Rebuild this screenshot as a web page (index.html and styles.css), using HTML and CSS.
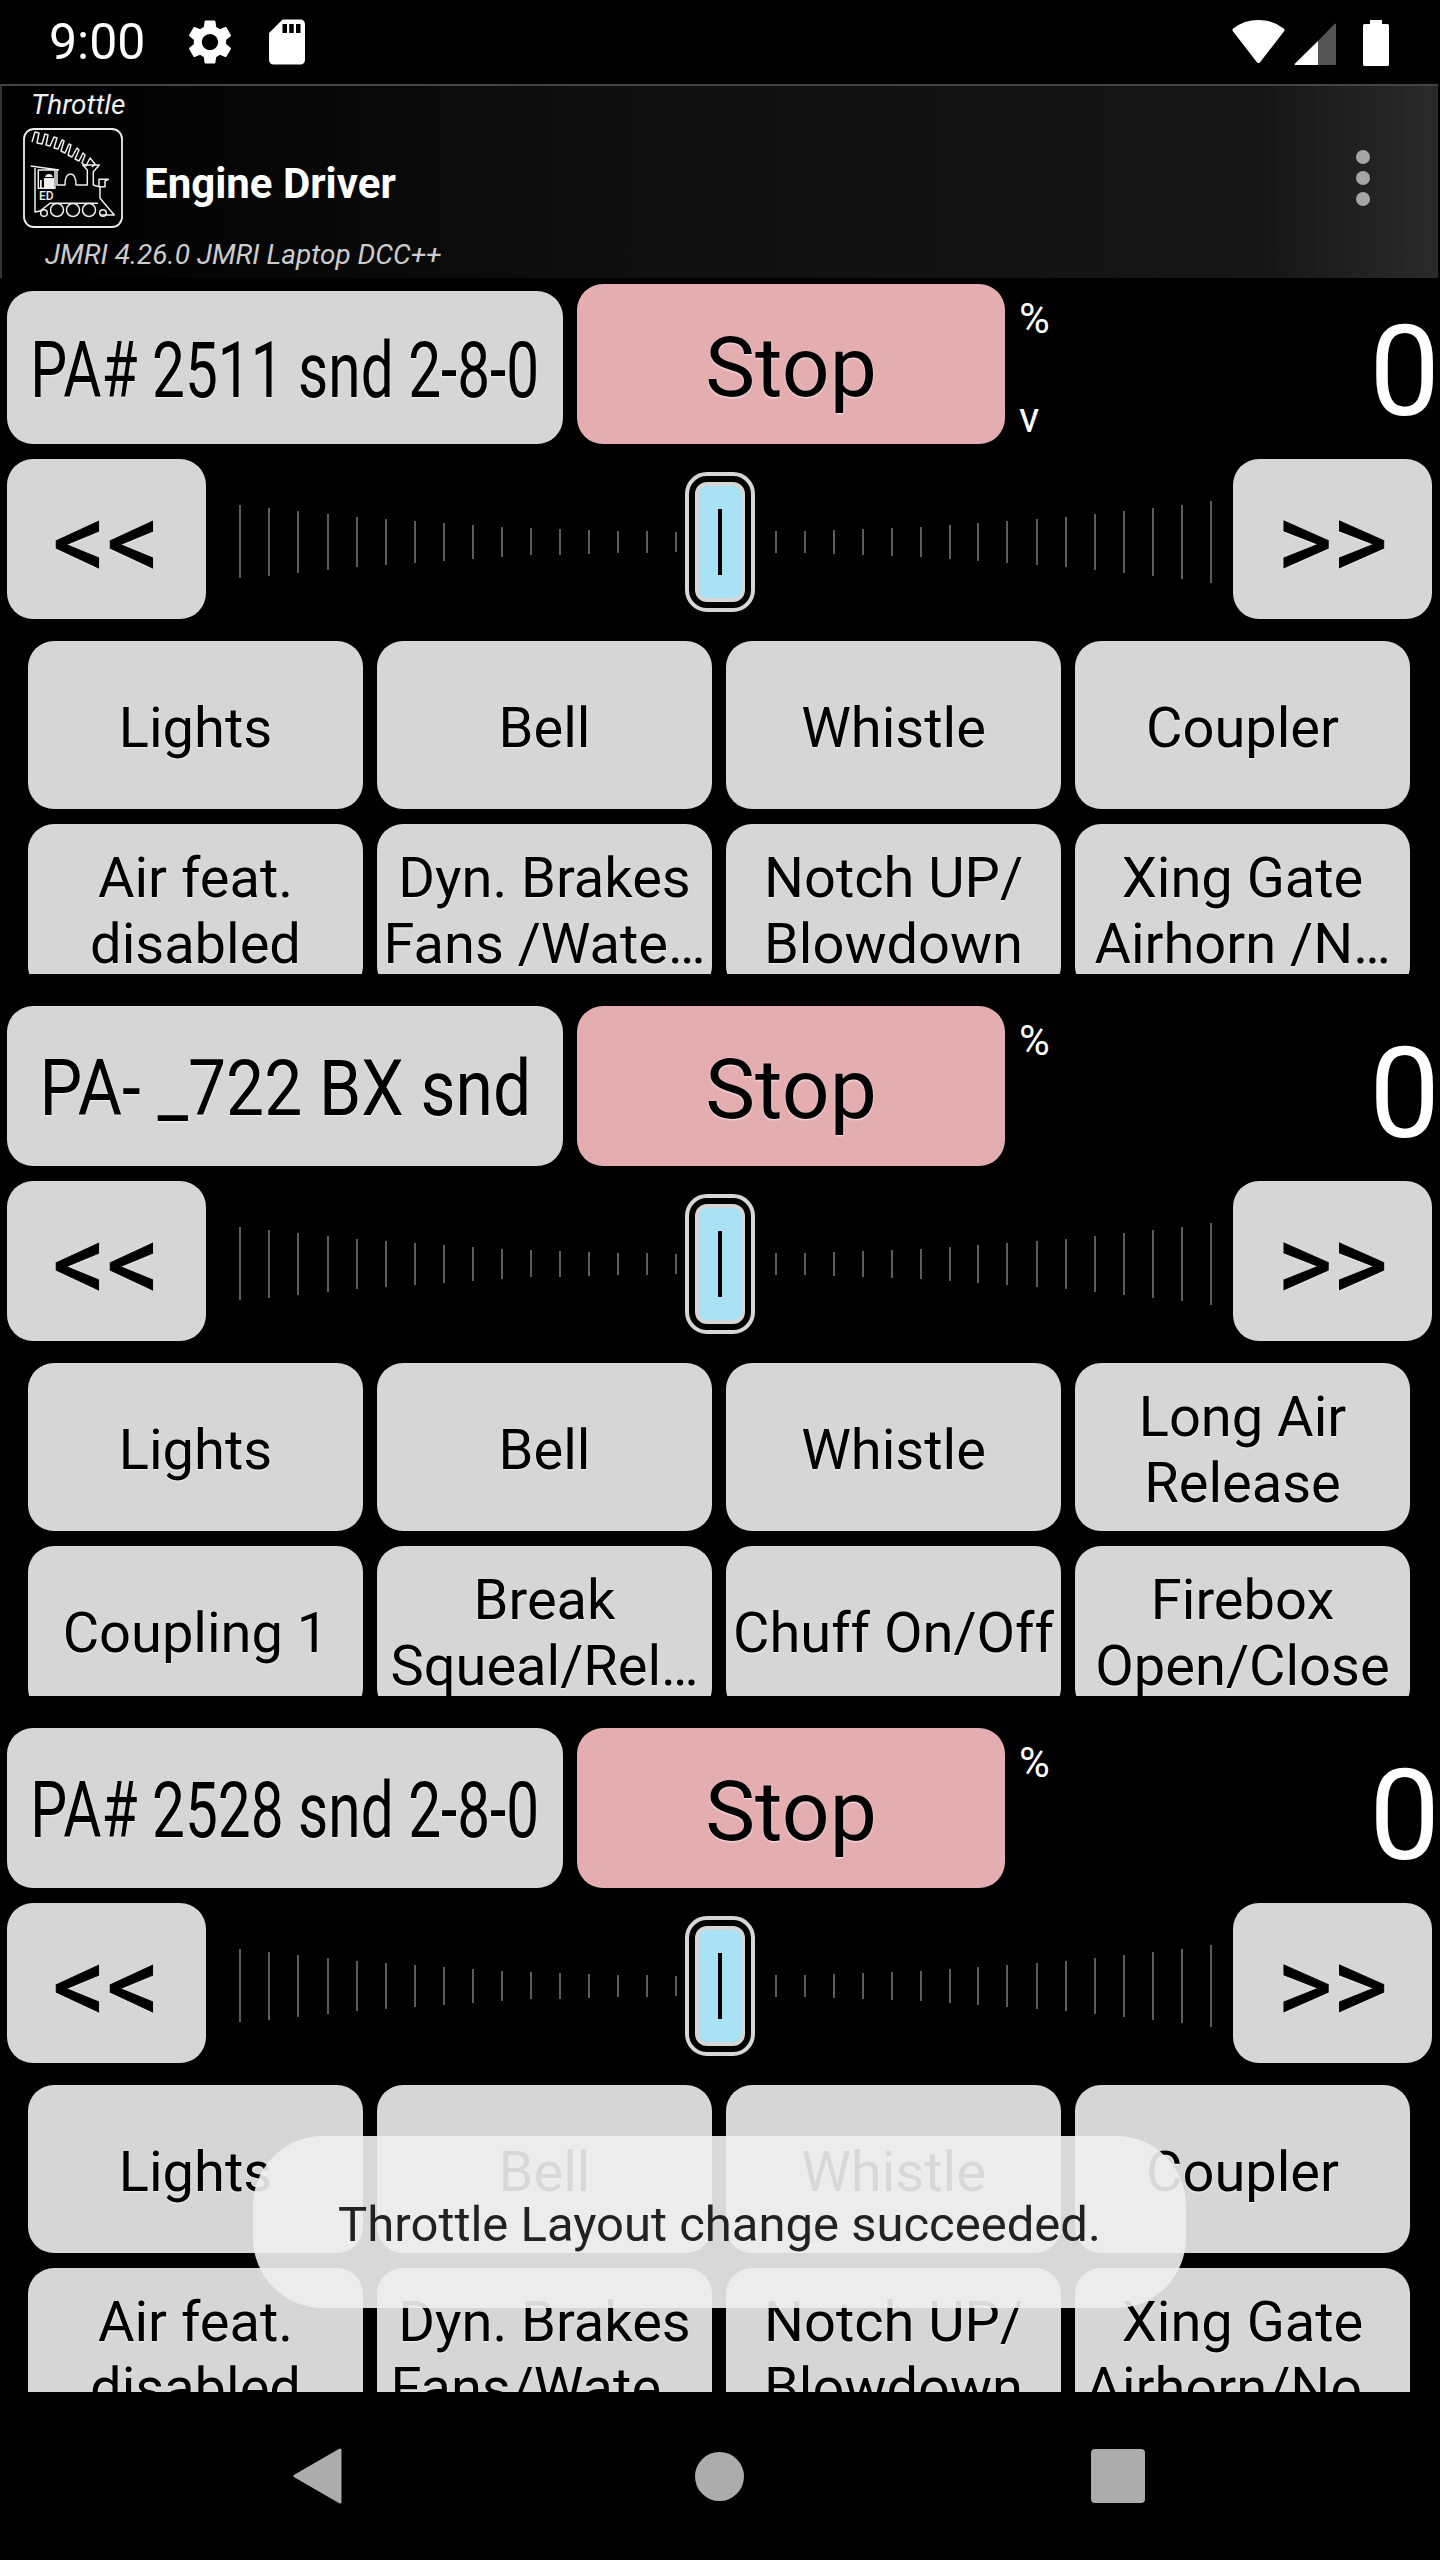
FILE: index.html
```html
<!DOCTYPE html>
<html lang="en">
<head>
    <meta charset="UTF-8">
    <meta name="viewport" content="width=device-width, initial-scale=1.0">
    <title>Engine Driver</title>
    <link rel="stylesheet" href="styles.css">
</head>
<body>
    <svg class="defs" width="0" height="0">
        <symbol id="ticks" viewBox="0 0 1027 160">
            <path d="M34 46V119M63 49V117M92 52V114M122 55V111M151 58V108M180 60V106M209 62V104M238 64V102M267 66V100M296 68V98M325 69V96M354 70V96M383 71V95M412 72V94M441 72V94M470 73V93M541 73V93M570 72V94M599 72V94M628 71V95M657 70V96M686 69V97M715 68V98M744 66V100M772 64V102M801 62V104M831 60V106M860 58V108M889 55V111M918 52V114M947 49V117M976 46V120M1005 42V124"/>
        </symbol>
    </svg>

    <div class="status-bar">
        <span class="clock">9:00</span>
        <svg class="status-icon gear" viewBox="0 0 24 24"><path d="M19.14 12.94c.04-.3.06-.61.06-.94 0-.32-.02-.64-.07-.94l2.03-1.58c.18-.14.23-.41.12-.61l-1.92-3.32c-.12-.22-.37-.29-.59-.22l-2.39.96c-.5-.38-1.03-.7-1.62-.94l-.36-2.54c-.04-.24-.24-.41-.48-.41h-3.84c-.24 0-.43.17-.47.41l-.36 2.54c-.59.24-1.13.57-1.62.94l-2.39-.96c-.22-.08-.47 0-.59.22L2.74 8.87c-.12.21-.08.47.12.61l2.03 1.58c-.05.3-.09.63-.09.94s.02.64.07.94l-2.03 1.58c-.18.14-.23.41-.12.61l1.92 3.32c.12.22.37.29.59.22l2.39-.96c.5.38 1.03.7 1.62.94l.36 2.54c.05.24.24.41.48.41h3.84c.24 0 .44-.17.47-.41l.36-2.54c.59-.24 1.13-.56 1.62-.94l2.39.96c.22.08.47 0 .59-.22l1.92-3.32c.12-.22.07-.47-.12-.61l-2.01-1.58zM12 15.6c-1.98 0-3.6-1.62-3.6-3.6s1.62-3.6 3.6-3.6 3.6 1.62 3.6 3.6-1.62 3.6-3.6 3.6z"/></svg>
        <svg class="status-icon sd" viewBox="0 0 24 24"><path d="M18 2h-8L4.02 8 4 20c0 1.1.9 2 2 2h12c1.100 0 2-.9 2-2V4c0-1.100-.9-2-2-2zm-6 6h-2V4h2v4zm3 0h-2V4h2v4zm3 0h-2V4h2v4z"/></svg>
        <div class="status-right">
            <svg class="wifi" width="53" height="43" viewBox="0 0 53 43"><path d="M26.500 2C17 2 9 5 2.500 10L26.500 41L50.500 10C44 5 36 2 26.500 2Z" stroke="#fff" stroke-width="4" stroke-linejoin="round"/></svg>
            <svg class="signal" width="42" height="42" viewBox="0 0 42 42"><path d="M24 18L.8 40.700A.8.8 0 0 0 1.300 42H24Z" fill="#fff"/><path d="M24 18L40.700 .8A.8.8 0 0 1 42 1.300V41A1 1 0 0 1 41 42H24Z" fill="#555"/></svg>
            <svg class="battery" width="26" height="46" viewBox="0 0 26 46"><path d="M7 0H19V4H24.500A1.500 1.500 0 0 1 26 5.500V44.500A1.500 1.500 0 0 1 24.500 46H1.500A1.500 1.500 0 0 1 0 44.500V5.500A1.500 1.500 0 0 1 1.500 4H7Z" fill="#fff"/></svg>
        </div>
    </div>

    <header class="action-bar">
        <div class="bar-subtitle">Throttle</div>
        <div class="bar-main">
            <svg class="logo" width="100" height="100" viewBox="0 0 100 100">
                <rect x="1" y="1" width="98" height="98" rx="10" fill="none" stroke="#eee" stroke-width="1.800"/>
                <g fill="none" stroke="#eee" stroke-width="1.500" stroke-linejoin="round">
                    <path d="M9 14L12 4L16 5L14 15L19 16L22 6L25 7L23 17L27 18L31 9L34 10L31 20L35 21L39 12L41 13L38 23L42 25L46 16L48 17L45 27L49 29L54 20L56 22L52 31L56 33L60 25L62 27L59 35L63 38L67 30L72 36L69 39"/>
                    <path d="M7.700 38L36 42M12 40V84L17 83L27 75.300H75M15.300 42H32V60.300H15.300ZM34 42V57H42C42 50 44 46 47.500 46C51 46 53 50 53 57H64.300V42L59.700 37H76.300L70.300 43.700V57L76 58.700V51.300H85.300L82 53V58.700H77V70.300L91.300 87H77"/>
                    <circle cx="34" cy="82" r="6.500"/>
                    <circle cx="50" cy="82" r="6.500"/>
                    <circle cx="66" cy="82" r="6.500"/>
                    <circle cx="21" cy="85" r="3.300"/>
                    <circle cx="80" cy="85" r="3.300"/>
                </g>
                <path d="M22 49C23 45 29 45 30 49ZM21 50H31V60H21ZM17 52H18.700V60H17Z" fill="#eee"/>
                <text class="logo-text" x="16" y="72">ED</text>
            </svg>
            <h1 class="bar-title">Engine Driver</h1>
            <div class="overflow-menu"><span></span><span></span><span></span></div>
        </div>
        <div class="bar-status">JMRI 4.26.0 JMRI Laptop DCC++</div>
    </header>

    <main class="throttles">
        <section class="throttle">
            <div class="top-row">
                <button class="btn name-btn name-btn-short"><span class="name-text name-text-long">PA# 2511 snd 2-8-0</span></button>
                <button class="btn stop-btn">Stop</button>
                <div class="speed">
                    <div class="speed-units"><span>%</span><span>v</span></div>
                    <div class="speed-value">0</div>
                </div>
            </div>
            <div class="slider-row">
                <button class="btn step-btn">&lt;&lt;</button>
                <div class="track">
                    <svg class="ticks"><use href="#ticks"/></svg>
                    <div class="thumb"><div class="thumb-inner"><div class="thumb-line"></div></div></div>
                </div>
                <button class="btn step-btn">&gt;&gt;</button>
            </div>
            <div class="functions">
                <div class="fn-grid">
                    <button class="btn fn-btn">Lights</button>
                    <button class="btn fn-btn">Bell</button>
                    <button class="btn fn-btn">Whistle</button>
                    <button class="btn fn-btn">Coupler</button>
                    <button class="btn fn-btn">Air feat.<br>disabled</button>
                    <button class="btn fn-btn">Dyn. Brakes<br>Fans /Wate…</button>
                    <button class="btn fn-btn">Notch UP/<br>Blowdown</button>
                    <button class="btn fn-btn">Xing Gate<br>Airhorn /N…</button>
                </div>
            </div>
        </section>

        <section class="throttle">
            <div class="top-row">
                <button class="btn name-btn"><span class="name-text">PA- _722 BX snd</span></button>
                <button class="btn stop-btn">Stop</button>
                <div class="speed">
                    <div class="speed-units"><span>%</span></div>
                    <div class="speed-value">0</div>
                </div>
            </div>
            <div class="slider-row">
                <button class="btn step-btn">&lt;&lt;</button>
                <div class="track">
                    <svg class="ticks"><use href="#ticks"/></svg>
                    <div class="thumb"><div class="thumb-inner"><div class="thumb-line"></div></div></div>
                </div>
                <button class="btn step-btn">&gt;&gt;</button>
            </div>
            <div class="functions">
                <div class="fn-grid">
                    <button class="btn fn-btn">Lights</button>
                    <button class="btn fn-btn">Bell</button>
                    <button class="btn fn-btn">Whistle</button>
                    <button class="btn fn-btn">Long Air<br>Release</button>
                    <button class="btn fn-btn">Coupling 1</button>
                    <button class="btn fn-btn">Break<br>Squeal/Rel…</button>
                    <button class="btn fn-btn">Chuff On/Off</button>
                    <button class="btn fn-btn">Firebox<br>Open/Close</button>
                </div>
            </div>
        </section>

        <section class="throttle">
            <div class="top-row">
                <button class="btn name-btn"><span class="name-text name-text-long">PA# 2528 snd 2-8-0</span></button>
                <button class="btn stop-btn">Stop</button>
                <div class="speed">
                    <div class="speed-units"><span>%</span></div>
                    <div class="speed-value">0</div>
                </div>
            </div>
            <div class="slider-row">
                <button class="btn step-btn">&lt;&lt;</button>
                <div class="track">
                    <svg class="ticks"><use href="#ticks"/></svg>
                    <div class="thumb"><div class="thumb-inner"><div class="thumb-line"></div></div></div>
                </div>
                <button class="btn step-btn">&gt;&gt;</button>
            </div>
            <div class="functions">
                <div class="fn-grid">
                    <button class="btn fn-btn">Lights</button>
                    <button class="btn fn-btn">Bell</button>
                    <button class="btn fn-btn">Whistle</button>
                    <button class="btn fn-btn">Coupler</button>
                    <button class="btn fn-btn">Air feat.<br>disabled</button>
                    <button class="btn fn-btn">Dyn. Brakes<br>Fans/Wate…</button>
                    <button class="btn fn-btn">Notch UP/<br>Blowdown</button>
                    <button class="btn fn-btn">Xing Gate<br>Airhorn/No…</button>
                </div>
            </div>
        </section>
    </main>

    <div class="toast">Throttle Layout change succeeded.</div>

    <nav class="nav-bar">
        <svg class="nav-back" width="49" height="56" viewBox="0 0 49 56"><path d="M47 2V54L2 28Z" fill="#acacac" stroke="#acacac" stroke-width="3" stroke-linejoin="round"/></svg>
        <div class="nav-home"></div>
        <div class="nav-recent"></div>
    </nav>
</body>
</html>
```

FILE: styles.css
```css
* {
    box-sizing: border-box;
}

html, body {
    margin: 0;
    background-color: #000;
}

body {
    position: relative;
    width: 1440px;
    height: 2560px;
    overflow: hidden;
    font-family: Roboto, "Liberation Sans", sans-serif;
    color: #fff;
}

.defs {
    display: block;
    height: 0;
}

/* status bar */
.status-bar {
    display: flex;
    align-items: center;
    height: 84px;
    padding-left: 49px;
}

.clock {
    width: 134px;
    font-size: 50px;
    line-height: 84px;
}

.status-icon {
    width: 54px;
    height: 54px;
    fill: #fff;
}

.sd {
    margin-left: 23px;
}

.status-right {
    display: flex;
    align-items: flex-start;
    margin-left: auto;
    padding: 1px 51px 0 0;
}

.wifi {
    fill: #fff;
}

.signal {
    margin: 3px 0 0 9px;
}

.battery {
    margin-left: 27px;
}

/* action bar */
.action-bar {
    height: 194px;
    margin-right: 2px;
    border-top: 2px solid #444;
    border-left: 2px solid #333;
    background: linear-gradient(90deg, #000 0%, #0f0f0f 45%, #161616 88%, #2a2a2a 100%);
}

.bar-subtitle {
    margin-top: 3px;
    padding-left: 29px;
    font-size: 28px;
    font-style: italic;
    line-height: 32px;
    color: #eee;
}

.bar-main {
    display: flex;
    align-items: center;
    height: 100px;
    margin-top: 7px;
    padding-left: 21px;
}

.logo-text {
    font-size: 12px;
    font-weight: 500;
    fill: #eee;
}

.bar-title {
    margin: 12px 0 0 21px;
    font-size: 42px;
    font-weight: 700;
    line-height: 48px;
}

.overflow-menu {
    display: flex;
    flex-direction: column;
    gap: 7px;
    margin: 0 68px 0 auto;
}

.overflow-menu span {
    width: 14px;
    height: 14px;
    border-radius: 50%;
    background-color: #a5a5a5;
}

.bar-status {
    margin-top: 12px;
    padding-left: 43px;
    font-size: 28px;
    font-style: italic;
    line-height: 30px;
    color: #ccc;
}

/* throttles */
.throttles {
    display: flex;
    flex-direction: column;
    gap: 32px;
    height: 2114px;
    padding-top: 6px;
    overflow: hidden;
}

.btn {
    margin: 0;
    padding: 6px 0 0;
    border: none;
    border-radius: 26px;
    background-color: #d6d6d6;
    color: #000;
    font-family: inherit;
    white-space: nowrap;
    overflow: hidden;
    text-shadow: 0 1px 2px rgba(255, 255, 255, 0.7);
}

.top-row {
    display: flex;
    align-items: flex-end;
    height: 160px;
    padding-left: 7px;
}

.name-btn {
    display: flex;
    justify-content: center;
    align-items: center;
    width: 556px;
    height: 160px;
    font-size: 77px;
}

.name-btn-short {
    height: 153px;
}

/* the app squeezes long loco names sideways to fit the button */
.name-text {
    flex: none;
    transform: scaleX(0.88);
}

.name-text-long {
    transform: scaleX(0.76);
}

.stop-btn {
    width: 428px;
    height: 160px;
    margin-left: 14px;
    background-color: #e4aeb1;
    font-size: 84px;
}

.speed {
    position: relative;
    flex: 1;
    align-self: stretch;
}

.speed-units {
    display: flex;
    flex-direction: column;
    gap: 50px;
    padding: 10px 0 0 14px;
    font-size: 42px;
    line-height: 49px;
}

/* sits over the empty part of the speed column */
.speed-value {
    position: absolute;
    top: 14px;
    right: 0;
    font-size: 126px;
    line-height: 148px;
}

.slider-row {
    display: flex;
    height: 160px;
    margin-top: 15px;
    padding: 0 8px 0 7px;
}

.step-btn {
    width: 199px;
    height: 160px;
    font-size: 106px;
    -webkit-text-stroke: 1px #000;
}

.track {
    position: relative;
    flex: 1;
}

.ticks {
    display: block;
    width: 100%;
    height: 160px;
    fill: none;
    stroke: #5c5c5c;
    stroke-width: 2;
}

.thumb {
    position: absolute;
    top: 13px;
    left: 479px;
    display: flex;
    justify-content: center;
    align-items: center;
    width: 70px;
    height: 140px;
    border: 4px solid #d6d6d6;
    border-radius: 22px;
    background-color: #000;
}

.thumb-inner {
    display: flex;
    justify-content: center;
    align-items: center;
    width: 50px;
    height: 120px;
    border: 4px solid #d6d6d6;
    border-radius: 12px;
    background-color: #a9e2f5;
}

.thumb-line {
    width: 4px;
    height: 66px;
    background-color: #000;
}

.functions {
    height: 333px;
    margin-top: 22px;
    padding-left: 28px;
    overflow: hidden;
}

.fn-grid {
    display: grid;
    grid-template-columns: repeat(4, 335px);
    grid-auto-rows: 168px;
    gap: 15px 14px;
}

.fn-btn {
    font-size: 56px;
    line-height: 66px;
}

/* toast */
.toast {
    position: absolute;
    top: 2136px;
    left: 253px;
    display: flex;
    justify-content: center;
    align-items: center;
    width: 933px;
    height: 172px;
    padding-top: 4px;
    border-radius: 70px;
    background-color: rgba(238, 238, 238, 0.906);
    color: #222;
    font-size: 49px;
}

/* nav bar */
.nav-bar {
    display: flex;
    align-items: center;
    height: 56px;
    margin-top: 56px;
    padding-left: 293px;
}

.nav-home {
    width: 49px;
    height: 49px;
    margin-left: 353px;
    border-radius: 50%;
    background-color: #acacac;
}

.nav-recent {
    width: 54px;
    height: 54px;
    margin-left: 347px;
    border-radius: 4px;
    background-color: #acacac;
}
```
